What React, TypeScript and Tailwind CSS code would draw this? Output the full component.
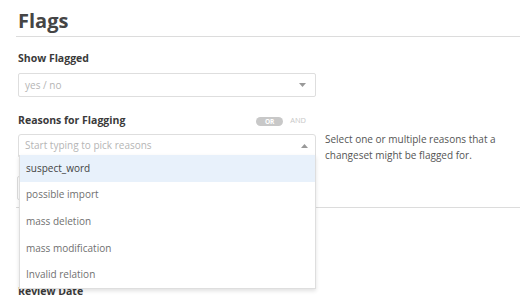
import React from "react";

const font = { fontFamily: '"Open Sans", "Noto Sans", sans-serif' };

function Caret({ up }: { up?: boolean }) {
  return (
    <svg width="7" height="4" viewBox="0 0 7 4" className="shrink-0">
      {up ? <path d="M0 4 L3.5 0 L7 4 Z" fill="#999" /> : <path d="M0 0 L3.5 4 L7 0 Z" fill="#999" />}
    </svg>
  );
}

const options = ["suspect_word", "possible import", "mass deletion", "mass modification", "Invalid relation"];

export default function App() {
  return (
    <div className="w-[520px] h-[300px] overflow-hidden bg-white relative" style={font}>
      <div className="pl-4">
        <div className="border-b border-[#dcdcdc] pt-[7px] pb-[1px]">
          <h1 className="pl-[2px] text-[20px] leading-[28px] font-bold text-[#454545]">Flags</h1>
        </div>
        <div className="pl-[2px] pt-[13px]">
          <div className="text-[10.5px] leading-[16px] font-bold text-[#3a3a3a]">Show Flagged</div>
          <div className="mt-[7px] w-[298px] h-[24px] border border-[#dedede] rounded-[2px] flex items-center justify-between pl-[6px] pr-[9px]">
            <span className="text-[10px] text-[#b5b5b5]">yes / no</span>
            <Caret />
          </div>
          <div className="mt-[16px] w-[298px] flex items-center justify-between h-[16px]">
            <span className="text-[10.5px] font-bold text-[#3a3a3a]">Reasons for Flagging</span>
            <div className="flex items-center gap-[7px] pr-[10px]">
              <span className="h-[9px] w-[27px] rounded-full bg-[#c8c8c8] text-white text-[6.5px] leading-[9px] font-bold text-center">OR</span>
              <span className="text-[7.5px] text-[#c8c8c8]">AND</span>
            </div>
          </div>
          <div className="flex mt-[5px]">
            <div className="w-[298px] relative">
              <div className="h-[23px] border border-[#dedede] rounded-t-[3px] flex items-center justify-between pl-[6px] pr-[7px]">
                <span className="text-[10px] text-[#b5b5b5]">Start typing to pick reasons</span>
                <Caret up />
              </div>
              <div className="mt-[19px] h-[24px] border border-[#dedede] rounded-[2px] w-[299px] -ml-[1px]" />
            </div>
            <p className="ml-[9px] mt-[-3px] w-[180px] text-[10px] leading-[16px] text-[#555]">
              Select one or multiple reasons that a changeset might be flagged for.
            </p>
          </div>
        </div>
        <div className="border-b border-[#dcdcdc] mt-[7px]" />
        <div className="pl-[2px] pt-[75px] text-[10.5px] leading-[16px] font-bold text-[#3a3a3a]">Review Date</div>
      </div>
      <div className="absolute left-[19px] top-[155px] w-[297px] bg-white border border-t-0 border-[#dedede] shadow-[0_2px_4px_rgba(0,0,0,0.12)]">
        {options.map((o, i) => (
          <div
            key={o}
            className={`h-[26.6px] flex items-center pl-[6px] text-[10px] ${i === 0 ? "bg-[#e8f1fb] text-[#444]" : "text-[#707070]"}`}
          >
            {o}
          </div>
        ))}
      </div>
    </div>
  );
}
